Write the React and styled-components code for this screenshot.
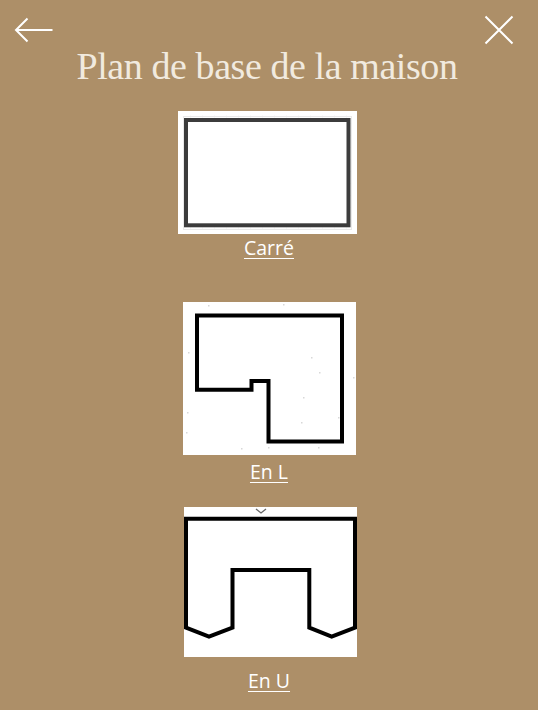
import React from "react";
import styled, { createGlobalStyle } from "styled-components";

const Global = createGlobalStyle`
  html, body { margin: 0; padding: 0; background: #ad8f68; }
  #root { width: 538px; height: 710px; overflow: hidden; }
`;

const Page = styled.div`
  width: 538px;
  height: 710px;
  background: #ad8f68;
  display: flex;
  flex-direction: column;
  font-family: "Open Sans", sans-serif;
`;

const Toolbar = styled.div`
  display: flex;
  justify-content: space-between;
  align-items: flex-start;
  padding: 15px 24px 0 14px;
  height: 32px;
`;

const IconButton = styled.button`
  border: 0;
  background: none;
  padding: 0;
  display: block;
  height: 32px;
`;

const Title = styled.h1`
  margin: 0;
  height: 64px;
  padding-right: 4px;
  font-family: "Liberation Serif", serif;
  font-weight: 400;
  font-size: 38px;
  line-height: 38px;
  letter-spacing: -0.42px;
  color: #f1eadf;
  text-align: center;
`;

const Choice = styled.a`
  display: flex;
  flex-direction: column;
  align-items: center;
  height: ${(p) => p.$height}px;
  color: #fff;
`;

const Plan = styled.svg`
  display: block;
  background: #fff;
  flex: none;
  margin-left: ${(p) => p.$shift}px;
`;

const Caption = styled.span`
  font-size: 19.5px;
  line-height: 24px;
  margin-top: ${(p) => p.$gap}px;
  color: #fff;
  text-decoration: underline;
  text-decoration-thickness: 1px;
  text-underline-offset: 3px;
`;

const specks = [
  [25, 3], [100, 2], [5, 50], [4, 110], [3, 130], [58, 146], [85, 145], [135, 145], [170, 75],
  [128, 55], [136, 70], [120, 95], [118, 120], [155, 115],
];

export default function App() {
  return (
    <Page>
      <Global />
      <Toolbar>
        <IconButton aria-label="Retour">
          <svg width="40" height="32" viewBox="0 0 40 32" fill="none" stroke="#fff" strokeWidth="2">
            <path d="M1.500 15h37M13.500 3.500 2 15l11.500 11.500" />
          </svg>
        </IconButton>
        <IconButton aria-label="Fermer">
          <svg width="30" height="30" viewBox="0 0 30 30" fill="none" stroke="#fff" strokeWidth="2">
            <path d="M1.500 1.500l27 27M28.500 1.500l-27 27" />
          </svg>
        </IconButton>
      </Toolbar>
      <Title>Plan de base de la maison</Title>
      <Choice $height={191}>
        <Plan $shift={-3} width="179" height="123" viewBox="0 0 179 123">
          <defs>
            <pattern id="grid" width="12" height="12" patternUnits="userSpaceOnUse">
              <path d="M12 0H0V12" fill="none" stroke="#f4f4f4" strokeWidth="1" />
            </pattern>
          </defs>
          <rect x="5" y="4" width="169" height="115" fill="url(#grid)" />
          <rect x="5.500" y="5.500" width="168" height="113" fill="none" stroke="#e9e9e9" strokeWidth="1" />
          <rect x="8" y="9" width="162.500" height="105.300" fill="#fff" stroke="#3c3c3c" strokeWidth="4" />
        </Plan>
        <Caption $gap={2}>Carré</Caption>
      </Choice>
      <Choice $height={205}>
        <Plan $shift={0} width="173" height="153" viewBox="0 0 173 153">
          <g fill="#d8d8d8">
            {specks.map(([x, y]) => (
              <rect key={`${x}-${y}`} x={x} y={y} width="1.500" height="1.500" />
            ))}
          </g>
          <path d="M14 13.500H159V139.500H85.500V79H68.500V87.700H14Z" fill="none" stroke="#000" strokeWidth="4" />
        </Plan>
        <Caption $gap={5}>En L</Caption>
      </Choice>
      <Choice $height={203}>
        <Plan $shift={2} width="173" height="150" viewBox="0 0 173 150">
          <path d="M72 2l5 4 5-4" fill="none" stroke="#666" strokeWidth="1.300" />
          <path d="M2 11.700H171V120.700L147.700 129.700L125.300 120.700V63H48.500V120.700L25 129.700L2 120.700Z" fill="none" stroke="#000" strokeWidth="4" />
        </Plan>
        <Caption $gap={12}>En U</Caption>
      </Choice>
    </Page>
  );
}
